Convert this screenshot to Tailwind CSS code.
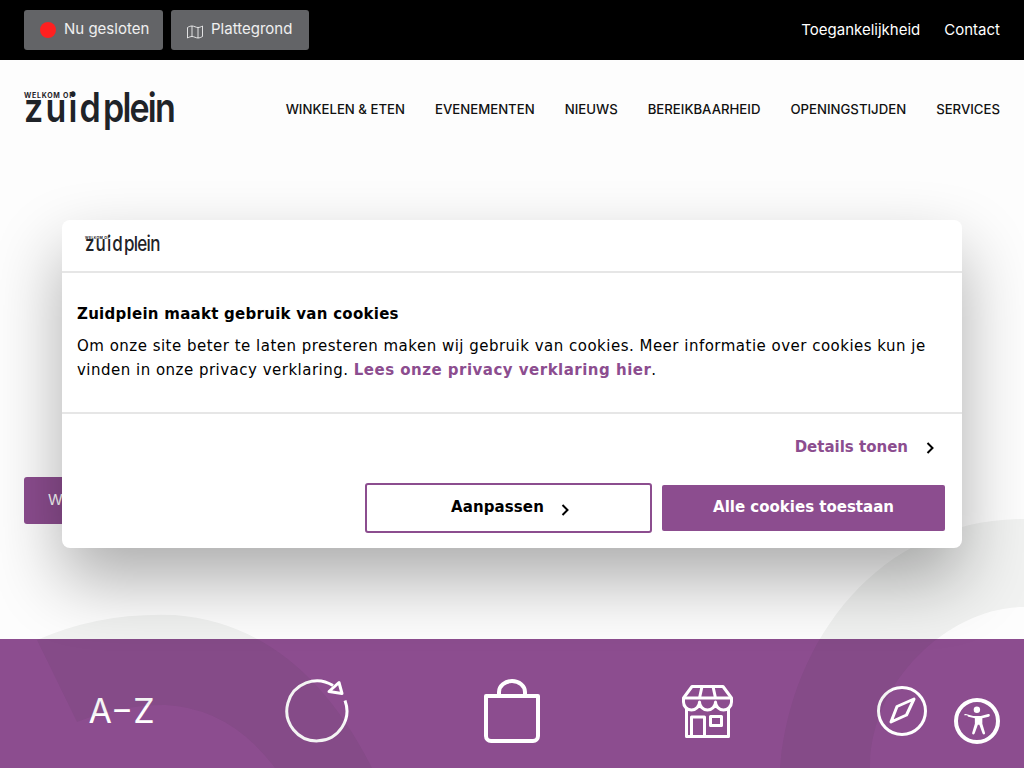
<!DOCTYPE html>
<html lang="en">
<head>
    <meta charset="UTF-8">
    <title>Zuidplein</title>
    <script src="https://cdn.jsdelivr.net/npm/@tailwindcss/browser@4"></script>
</head>
<body class="bg-white">
<div class="relative w-[1024px] h-[768px] overflow-hidden flex flex-col bg-[#fdfdfd] font-['Inter',sans-serif]">

    <!-- Top bar -->
    <div class="h-[60px] shrink-0 bg-black flex items-center justify-between pl-6 pr-6 text-white text-[15px]">
        <div class="flex gap-2">
            <a class="h-10 w-[139px] bg-[#636467] rounded-[3px] flex items-center pl-4 gap-2 text-white/90">
                <span class="w-4 h-4 rounded-full bg-[#ff2020]"></span><span class="-mt-px">Nu gesloten</span>
            </a>
            <a class="h-10 w-[138px] bg-[#636467] rounded-[3px] flex items-center pl-4 gap-2 text-white/90">
                <svg class="mt-[3px]" width="16" height="14" viewBox="0 0 16 14" fill="none" stroke="currentColor" stroke-width=".9"><path d="M.5 2.500C2 1.500 3.500 1 5 1c2 0 4 1.500 6 1.500 1.500 0 3-.7 4.500-1.500v10.500C14 12.300 12.500 13 11 13c-2 0-4-1.500-6-1.500-1.500 0-3 .7-4.500 1.500zM5 1v10.500M11 2.500V13"/></svg><span class="-mt-px">Plattegrond</span>
            </a>
        </div>
        <div class="flex gap-6">
            <a>Toegankelijkheid</a>
            <a>Contact</a>
        </div>
    </div>

    <!-- Main nav -->
    <div class="h-[98px] shrink-0 flex items-center justify-between px-6">
        <div class="flex flex-col w-[150px] text-[#1f2328] mt-[-1px]">
            <span class="text-[7px] leading-[6px] font-bold tracking-[.75px] whitespace-nowrap">WELKOM OP</span>
            <span class="text-[34px] leading-[25px] mt-[1px] font-semibold whitespace-nowrap scale-y-[1.2] origin-bottom -translate-y-[3px]"><span class="tracking-[2.200px]">zuid</span><span class="tracking-[-1.800px]">plein</span></span>
        </div>
        <nav class="flex gap-[30px] text-[13.200px] font-medium text-[#111] mt-[1px]">
            <a>WINKELEN &amp; ETEN</a>
            <a>EVENEMENTEN</a>
            <a>NIEUWS</a>
            <a>BEREIKBAARHEID</a>
            <a>OPENINGSTIJDEN</a>
            <a>SERVICES</a>
        </nav>
    </div>

    <!-- Hero -->
    <div class="flex-1 pl-6 pt-[319px]">
        <a class="h-[47px] w-[160px] rounded-[3px] bg-[#8c4d8f] text-white text-[15px] flex items-center pl-6">Winkelen</a>
    </div>

    <!-- Quick links -->
    <div class="relative z-10 h-[129px] shrink-0 bg-[#8c4d8f] px-6 pt-10 grid grid-cols-5 items-start text-white">
        <div class="h-16 flex items-center justify-center text-[34px] leading-none font-normal">A−Z</div>
        <div class="h-16 flex items-center justify-center">
            <svg width="64" height="64" viewBox="0 0 64 64" fill="none" stroke="currentColor" stroke-width="3"><path d="M48 6.600A30 30 0 1 0 60 21.500"/><path d="M54 3.500 57 14.500 44 12.500Z" stroke-linejoin="round"/></svg>
        </div>
        <div class="h-16 flex items-center justify-center">
            <svg width="56" height="64" viewBox="0 0 56 64" fill="none" stroke="currentColor" stroke-width="4"><path d="M2 17h52v40a5 5 0 0 1-5 5H7a5 5 0 0 1-5-5z" stroke-linejoin="round"/><path d="M15 17v-4a13 11 0 0 1 26 0v4"/></svg>
        </div>
        <div class="h-16 flex items-center justify-center">
            <svg width="51" height="53" viewBox="0 0 51 53" fill="none" stroke="currentColor" stroke-width="3" stroke-linejoin="round"><path d="M1.500 13 10 1.500H41L49.500 13V17A8 8 0 0 1 33.500 17 8 8 0 0 1 17.500 17 8 8 0 0 1 1.500 17Z"/><path d="M1.500 13H49.500M17.500 13 20 1.500M33.500 13 31 1.500M4.500 24V51.500H46.500V24"/><path d="M9.500 51V32H22.500V51M28.500 31.500H39.500V40.500H28.500Z"/></svg>
        </div>
        <div class="h-16 flex items-center justify-center">
            <svg width="52" height="52" viewBox="0 0 52 52" fill="none" stroke="currentColor" stroke-width="3" stroke-linejoin="round"><circle cx="26" cy="26" r="23.500"/><path d="M38 14 30.500 30 15 37 21 21.500Z"/></svg>
        </div>
    </div>

    <!-- Background shapes -->
    <svg class="absolute inset-0 z-10 pointer-events-none" width="1024" height="768" viewBox="0 0 1024 768" fill="#0a2a1a" fill-opacity=".05">
        <path d="M37 640Q100 612 175 615 300 625 372 768H275Q230 708 165 705 120 705 77 722Z"/>
        <path d="M780 768C790 640 880 519 1024 519V607C950 607 870 680 870 768Z"/>
    </svg>

    <!-- Accessibility button -->
    <button class="absolute z-20 left-[954px] top-[698px] w-[46px] h-[46px] rounded-full border-[4px] border-white flex items-center justify-center text-white">
        <svg width="32" height="32" viewBox="1 2 30 30" fill="currentColor"><circle cx="15.900" cy="6.500" r="3"/><path d="M4 11.500c0-.800.800-1.300 1.500-1l7 1.800h7l7-1.800c.8-.3 1.500.2 1.500 1s-.5 1.200-1 1.400l-6 1.600v5l2.500 8.500c.2.900-.3 1.500-1 1.600-.7.100-1.200-.3-1.400-1l-2.900-8h-1.400l-2.900 8c-.2.700-.7 1.100-1.400 1-.7-.1-1.200-.7-1-1.600l2.500-8.500v-5l-6-1.600c-.5-.2-1-.6-1-1.400z"/></svg>
    </button>

    <!-- Cookie dialog -->
    <div class="absolute z-30 left-[62px] top-[220px] w-[900px] h-[328px] bg-white rounded-lg shadow-[0_32px_68px_rgba(0,0,0,0.32)] flex flex-col font-['DejaVu_Sans',sans-serif] text-black">
        <div class="h-[53px] shrink-0 border-b-2 border-[#e6e6e6] pl-[23px] pt-[17px] text-[#1f2328] font-['Inter',sans-serif]">
            <div class="flex flex-col w-[76px]">
                <span class="text-[3.500px] leading-[3px] font-bold tracking-[.35px] whitespace-nowrap">WELKOM OP</span>
                <span class="text-[17px] leading-[13px] font-medium whitespace-nowrap scale-y-[1.2] origin-bottom -translate-y-[1px]"><span class="tracking-[1.100px]">zuid</span><span class="tracking-[-.7px]">plein</span></span>
            </div>
        </div>
        <div class="h-[141px] shrink-0 border-b-2 border-[#e6e6e6] px-[15px] pt-[29px] text-[15px] leading-[24px] tracking-[.49px]">
            <h2 class="font-bold tracking-[.27px]">Zuidplein maakt gebruik van cookies</h2>
            <p class="mt-2">Om onze site beter te laten presteren maken wij gebruik van cookies. Meer informatie over cookies kun je vinden in onze privacy verklaring. <a class="font-bold text-[#8c4d8f]">Lees onze privacy verklaring hier</a>.</p>
        </div>
        <div class="flex-1 flex flex-col items-end pr-[17px] pt-[21px]">
            <a class="flex items-center text-[15px] leading-[24px] font-bold text-[#8c4d8f] pr-[11px]">Details tonen
                <svg class="ml-[18px] mt-[2px]" width="8" height="12" viewBox="0 0 8 12" fill="none" stroke="#000" stroke-width="2"><path d="M1.500 1 6.500 6 1.500 11"/></svg>
            </a>
            <div class="mt-[24px] flex items-center gap-[10px]">
                <button class="w-[287px] h-[50px] pb-[2px] pl-[3px] border-2 border-[#8c4d8f] rounded-[3px] flex items-center justify-center font-bold text-[15px] tracking-[.1px]">Aanpassen
                    <svg class="ml-[17px] mt-[5px]" width="8" height="12" viewBox="0 0 8 12" fill="none" stroke="#000" stroke-width="2"><path d="M1.500 1 6.500 6 1.500 11"/></svg>
                </button>
                <button class="w-[283px] h-[46px] pb-[2px] bg-[#8c4d8f] rounded-[2px] font-bold text-white text-[15px]">Alle cookies toestaan</button>
            </div>
        </div>
    </div>
</div>
</body>
</html>
